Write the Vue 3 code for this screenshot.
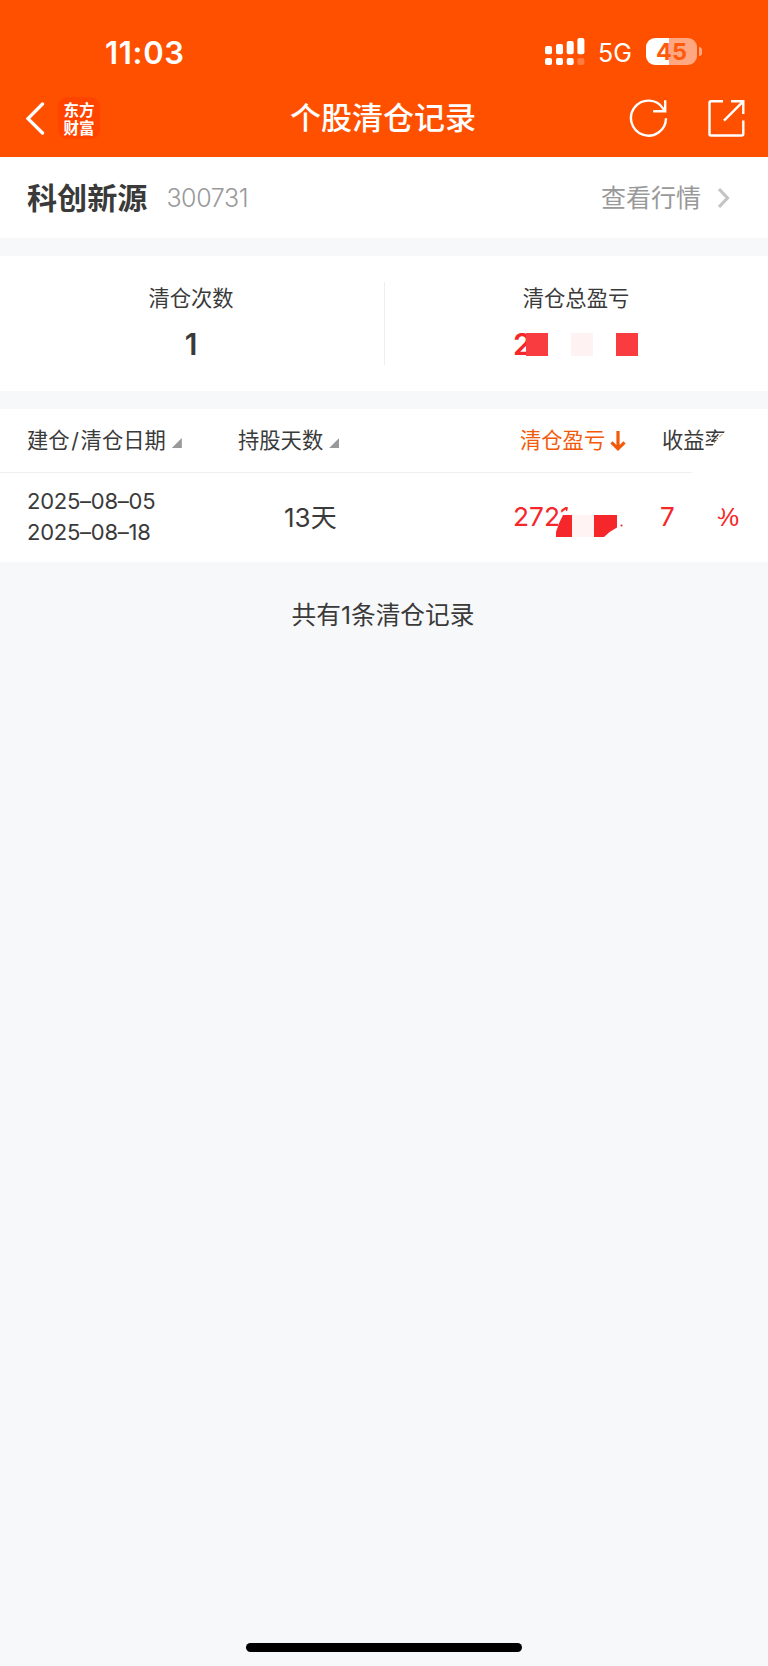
<script setup>
const stock = { name: '科创新源', code: '300731' }
const record = { opened: '2025–08–05', closed: '2025–08–18', days: '13' }
</script>

<template>
  <main class="page">
    <header class="top">
      <div class="status">
        <span class="time">11:03</span>
        <svg class="signal" width="40" height="28" viewBox="0 0 40 28" fill="#fff">
          <rect x="0" y="8" width="7" height="8.3" rx="2" />
          <rect x="11" y="6" width="7" height="10.3" rx="2" />
          <rect x="21.7" y="3" width="7" height="13.3" rx="2" />
          <rect x="32.4" y="0" width="7" height="16.3" rx="2" />
          <rect x="0" y="20" width="7" height="7" rx="2" />
          <rect x="11" y="20" width="7" height="7" rx="2" />
          <rect x="21.7" y="20" width="7" height="7" rx="2" />
          <rect x="32.4" y="20" width="7" height="7" rx="2" opacity=".25" />
        </svg>
        <span class="network">5G</span>
        <div class="battery"><span>45</span></div>
        <i class="nub"></i>
      </div>
      <nav class="nav">
        <div class="nav-left">
          <svg width="20" height="34" viewBox="0 0 20 34" fill="none" stroke="#fff" stroke-width="3.3" stroke-linecap="round"><path d="M16.5 3 2 17.6 16.5 32" /></svg>
          <div class="logo"><span>东方</span><span>财富</span></div>
        </div>
        <h1>个股清仓记录</h1>
        <div class="nav-right">
          <svg width="40" height="40" viewBox="0 0 40 40" fill="none" stroke="#fff" stroke-width="2.4">
            <path d="M38 20.2A17.5 17.5 0 1 1 35.2 10.6L36.5 13M37.2 2.3V13.2H25.2" />
          </svg>
          <svg width="40" height="40" viewBox="0 0 40 40" fill="none" stroke="#fff" stroke-width="2.4">
            <path d="M17 3.3H5Q3.5 3.3 3.5 5V36Q3.5 37.5 5 37.5H35.5Q37.3 37.5 37.3 36V22.5M25 3.3H37.3V16M37 3.6 18 22.6" />
          </svg>
        </div>
      </nav>
    </header>

    <section class="stock">
      <strong>{{ stock.name }}</strong>
      <span class="code">{{ stock.code }}</span>
      <a class="quote">查看行情</a>
      <svg width="14" height="22" viewBox="0 0 14 22" fill="none" stroke="#c4c4c4" stroke-width="3.2"><path d="M2 2 10.5 11 2 20" /></svg>
    </section>

    <section class="summary">
      <div class="stat">
        <span class="label">清仓次数</span>
        <b>1</b>
      </div>
      <div class="stat">
        <span class="label">清仓总盈亏</span>
        <div class="masked">
          <b>2</b><i></i><i class="pale"></i><i></i>
        </div>
      </div>
    </section>

    <section class="table">
      <div class="row head">
        <div class="c1">建仓<span class="slash">/</span>清仓日期<i class="sort"></i></div>
        <div class="c2">持股天数<i class="sort"></i></div>
        <div class="c3 active">清仓盈亏<svg width="16" height="22" viewBox="0 0 16 22" fill="none" stroke="#f25a0a" stroke-width="3.2"><path d="M8 1V19M1.5 12.3 8 18.8 14.5 12.3" /></svg></div>
        <div class="c4"><span>收益</span><span class="cut">率</span></div>
      </div>
      <div class="row body">
        <div class="c1 dates"><span>{{ record.opened }}</span><span>{{ record.closed }}</span></div>
        <div class="c2 days">{{ record.days }}<span>天</span></div>
        <div class="c3 profit">
          <span>272</span><span class="one">1</span>
          <svg class="mask" width="70" height="24" viewBox="0 0 70 24">
            <path d="M0 23V18Q3 8 7 1H16V23Z" fill="#f5272a" />
            <rect x="16" y="1" width="22" height="22" fill="#fff3f4" />
            <path d="M38 1H61V13.5Q54 17 48 23H38Z" fill="#f5272a" />
            <circle cx="65.5" cy="11.5" r="1.1" fill="#f5272a" />
          </svg>
        </div>
        <div class="c4 rate"><span>7</span><span class="percent">%</span></div>
      </div>
    </section>

    <p class="total">共有1条清仓记录</p>
    <div class="home"></div>
  </main>
</template>

<style>
body { margin: 0; background: #f7f8fa; }
</style>

<style scoped>
* { box-sizing: border-box; }
i { font-style: normal; display: block; }
.page { width: 768px; height: 1666px; background: #f7f8fa; color: #3a3a3a; font-family: Inter, "Noto Sans CJK SC", sans-serif; display: flex; flex-direction: column; white-space: nowrap; }
.top { height: 157px; background: #ff5000; color: #fff; }
.status { height: 78px; padding: 38px 0 0 105px; display: flex; align-items: flex-start; }
.time { width: 440px; font-size: 31px; font-weight: 600; line-height: 30px; letter-spacing: .7px; }
.network { width: 48px; margin-left: 13px; font-size: 25px; line-height: 31px; }
.battery { width: 51px; height: 27px; border-radius: 9px; background: linear-gradient(90deg, #fff 23px, #ffa780 23px); color: #ff5a0c; font-size: 23.5px; font-weight: 700; line-height: 28px; text-align: center; }
.nub { width: 3px; height: 9px; margin: 9px 0 0 2px; border-radius: 0 4px 4px 0; background: #ffa780; }
.nav { height: 79px; display: grid; grid-template-columns: 1fr auto 1fr; align-items: center; }
.nav-left { display: flex; align-items: center; gap: 12px; padding-left: 26px; }
.logo { width: 42px; height: 42px; border-radius: 9px; background: #ff4400; display: flex; flex-direction: column; align-items: center; justify-content: center; font: 700 15.5px/18px "Noto Sans CJK SC", sans-serif; }
h1 { margin: 0 1px 0 -1px; font-size: 31px; font-weight: 500; line-height: 40px; }
.nav-right { display: flex; justify-content: flex-end; gap: 38px; padding-right: 22px; }
.stock { height: 81px; background: #fff; padding: 0 37px 0 27px; display: flex; align-items: center; }
.stock strong { font-size: 30.1px; font-weight: 700; padding-bottom: 4px; }
.code { margin-left: 19px; color: #999; font-size: 25px; font-weight: 300; letter-spacing: -.4px; }
.quote { margin-left: auto; margin-right: 16px; color: #999; font-size: 25px; padding-bottom: 3px; }
.summary { margin-top: 18px; height: 135px; background: #fff; display: flex; padding: 26px 0; }
.stat { height: 83px; display: flex; flex-direction: column; align-items: center; }
.stat:first-child { flex: 0 0 385px; border-right: 1px solid #eee; padding-right: 2px; }
.stat:last-child { flex: 1; padding-right: 1px; }
.label { font-size: 21.3px; line-height: 32px; }
.stat b { font-size: 30px; line-height: 36px; margin-top: 12px; font-weight: 600; }
.masked { display: flex; width: 125px; height: 23px; margin: 19px 0 0 -1px; color: #f5272a; }
.masked b { width: 13px; margin: 0; line-height: 23px; overflow: hidden; }
.masked i { width: 22px; height: 23px; background: #f83c3f; margin-right: 23px; }
.masked i:last-child { margin-right: 0; }
.masked .pale { background: #fff2f2; }
.table { margin-top: 18px; background: #fff; height: 153px; }
.row { display: grid; grid-template-columns: 211px 275px 148px 107px; padding-left: 27px; }
.head { height: 64px; font-size: 21.3px; line-height: 63px; background: linear-gradient(#f0f0f0, #f0f0f0) 0 63px / 692px 1px no-repeat; }
.head > div { display: flex; align-items: center; height: 63px; }
.slash { width: 11px; text-align: center; }
.sort { width: 10px; height: 10px; margin: 5px 0 0 6px; background: #999; clip-path: polygon(100% 0, 100% 100%, 0 100%); }
.c3 { padding-left: 7px; }
.active { color: #f25a0a; }
.active svg { margin-left: 5px; }
.head .c4 { padding-left: 1px; }
.cut { clip-path: polygon(0 0, 100% 0, 100% 35%, 60% 48%, 42% 56%, 28% 65%, 0 68%); }
.body { height: 89px; }
.dates { display: flex; flex-direction: column; padding-top: 13px; font-size: 22px; line-height: 31px; letter-spacing: -.25px; }
.days { font-size: 26px; line-height: 89px; padding-left: 46px; }
.profit { padding-left: 0; display: flex; color: #f5272a; font-size: 26.3px; line-height: 88px; position: relative; }
.one { clip-path: polygon(0 0, 100% 0, 70% 42%, 0 46%); }
.mask { position: absolute; left: 43px; top: 41px; }
.rate { display: flex; color: #f5272a; font-size: 26px; line-height: 88px; }
.rate > span:first-child { width: 56px; margin-left: -1px; }
.percent { font-family: "Liberation Sans", sans-serif; clip-path: polygon(0 51%, 22% 47%, 28% 30%, 100% 30%, 100% 80%, 20% 80%, 20% 54%); }
.total { margin: 33px 2px 0 0; height: 40px; line-height: 40px; text-align: center; font-size: 24.7px; }
.home { width: 276px; height: 9px; border-radius: 5px; background: #000; margin: auto auto 14px 246px; }
</style>
